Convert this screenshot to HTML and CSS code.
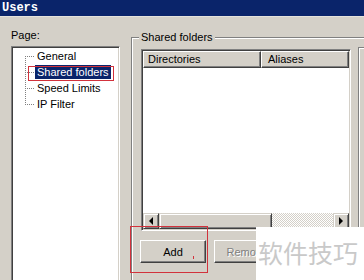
FILE: index.html
```html
<!DOCTYPE html>
<html>
<head>
<meta charset="utf-8">
<link rel="stylesheet" href="styles.css">
</head>
<body>
<div class="window">
  <div class="titlebar">Users</div>
  <div class="main">
    <div class="pages">
      <div class="label">Page:</div>
      <div class="tree">
        <div class="node"><span class="conn first"></span><span class="text">General</span></div>
        <div class="node"><span class="conn mid"></span><span class="text sel">Shared folders</span><span class="mark"></span></div>
        <div class="node"><span class="conn mid"></span><span class="text">Speed Limits</span></div>
        <div class="node"><span class="conn last"></span><span class="text">IP Filter</span></div>
      </div>
    </div>
    <fieldset class="group">
      <legend>Shared folders</legend>
      <div class="row">
        <div class="list">
          <div class="header">
            <div class="col c1">Directories</div>
            <div class="col c2">Aliases</div>
          </div>
          <div class="body"></div>
          <div class="hscroll">
            <div class="sbtn"><span class="arrow-left"></span></div>
            <div class="thumb"></div>
            <div class="track"></div>
            <div class="sbtn"><span class="arrow-right"></span></div>
          </div>
        </div>
        <div class="side"></div>
      </div>
      <div class="buttons">
        <div class="btnwrap">
          <button class="btn">Add</button>
          <span class="redbox"></span>
          <span class="tick"></span>
        </div>
        <button class="btn" disabled>Remove</button>
      </div>
    </fieldset>
  </div>
  <div class="watermark">软件技巧</div>
</div>
</body>
</html>
```

FILE: styles.css
```css
html, body {
  margin: 0;
  padding: 0;
  width: 364px;
  height: 280px;
  overflow: hidden;
  background: #d4d0c8;
}

.window {
  position: relative;
  width: 364px;
  height: 280px;
  overflow: hidden;
  font-family: "Liberation Sans", Arial, sans-serif;
  font-size: 11px;
  color: #000;
}

.titlebar {
  height: 17px;
  line-height: 17px;
  background: #0a246a;
  color: #fff;
  font-family: "Liberation Mono", "DejaVu Sans Mono", monospace;
  font-weight: bold;
  font-size: 12px;
  padding-left: 2px;
  border-bottom: 1px solid #e4e2dc;
  box-sizing: border-box;
}

.main {
  display: flex;
  align-items: flex-start;
  padding-left: 11px;
}

.pages {
  flex: none;
  width: 109px;
  margin-top: 12px;
}

.label {
  line-height: 13px;
  height: 13px;
}

.tree {
  margin-top: 4px;
  height: 260px;
  background: #fff;
  border: 1px solid;
  border-color: #808080 #fff #fff #808080;
  box-shadow: inset 1px 1px 0 #404040, inset -1px -1px 0 #d4d0c8;
  padding: 1px;
  box-sizing: border-box;
}

.node {
  position: relative;
  display: flex;
  align-items: center;
  height: 16px;
}

.conn {
  flex: none;
  width: 22px;
  height: 16px;
  background-repeat: no-repeat;
}

.conn.first {
  background-image:
    repeating-linear-gradient(to right, #808080 0 1px, transparent 1px 2px),
    repeating-linear-gradient(to bottom, #808080 0 1px, transparent 1px 2px);
  background-size: 10px 1px, 1px 8px;
  background-position: 12px 8px, 12px 8px;
}

.conn.mid {
  background-image:
    repeating-linear-gradient(to right, #808080 0 1px, transparent 1px 2px),
    repeating-linear-gradient(to bottom, #808080 0 1px, transparent 1px 2px);
  background-size: 10px 1px, 1px 16px;
  background-position: 12px 8px, 12px 0;
}

.conn.last {
  background-image:
    repeating-linear-gradient(to right, #808080 0 1px, transparent 1px 2px),
    repeating-linear-gradient(to bottom, #808080 0 1px, transparent 1px 2px);
  background-size: 10px 1px, 1px 9px;
  background-position: 12px 8px, 12px 0;
}

.text {
  line-height: 14px;
  padding: 0 2px;
  white-space: nowrap;
}

.text.sel {
  background: #0a246a;
  color: #fff;
}

.mark {
  position: absolute;
  left: 15px;
  top: 2px;
  width: 86px;
  height: 15px;
  border: 1px solid #d2323c;
  box-sizing: border-box;
}

.group {
  flex: none;
  margin: 14px 0 0 11px;
  padding: 5px 0 0 9px;
  border: 1px solid #808080;
  box-shadow: inset 1px 1px 0 #fff;
  min-width: 0;
  height: 300px;
  box-sizing: border-box;
}

.group legend {
  margin-left: -2px;
  padding: 0 2px;
  line-height: 13px;
  background: #d4d0c8;
}

.row {
  display: flex;
  align-items: flex-start;
  gap: 7px;
  height: 182px;
}

.list {
  flex: none;
  width: 210px;
  height: 182px;
  display: flex;
  flex-direction: column;
  border: 1px solid;
  border-color: #808080 #fff #fff #808080;
  box-shadow: inset 1px 1px 0 #404040, inset -1px -1px 0 #d4d0c8;
  padding: 1px;
  box-sizing: border-box;
  background: #fff;
}

.header {
  display: flex;
  height: 17px;
  flex: none;
}

.col {
  height: 17px;
  line-height: 15px;
  background: #d4d0c8;
  border-top: 1px solid #fff;
  border-left: 1px solid #fff;
  border-right: 1px solid #404040;
  border-bottom: 1px solid #404040;
  box-shadow: inset -1px -1px 0 #808080;
  box-sizing: border-box;
  white-space: nowrap;
  overflow: hidden;
}

.c1 {
  width: 118px;
  padding-left: 4px;
}

.c2 {
  flex: 1;
  padding-left: 6px;
}

.body {
  flex: 1;
  background: #fff;
}

.hscroll {
  display: flex;
  height: 16px;
  flex: none;
}

.sbtn, .thumb {
  background: #d4d0c8;
  border-top: 1px solid #d4d0c8;
  border-left: 1px solid #d4d0c8;
  border-right: 1px solid #404040;
  border-bottom: 1px solid #404040;
  box-shadow: inset 1px 1px 0 #fff, inset -1px -1px 0 #808080;
  box-sizing: border-box;
}

.sbtn {
  flex: none;
  width: 16px;
  height: 16px;
  display: flex;
  align-items: center;
  justify-content: center;
}

.thumb {
  flex: none;
  width: 113px;
  height: 16px;
}

.track {
  flex: 1;
  height: 16px;
  background-color: #fff;
  background-image: repeating-conic-gradient(#d4d0c8 0 25%, #fff 0 50%);
  background-size: 2px 2px;
}

.arrow-left {
  width: 0;
  height: 0;
  border-top: 4px solid transparent;
  border-bottom: 4px solid transparent;
  border-right: 4px solid #000;
}

.arrow-right {
  width: 0;
  height: 0;
  border-top: 4px solid transparent;
  border-bottom: 4px solid transparent;
  border-left: 4px solid #000;
}

.side {
  flex: none;
  margin-top: -2px;
  width: 30px;
  height: 180px;
  border-top: 1px solid #808080;
  border-left: 1px solid #808080;
  box-shadow: inset 1px 1px 0 #fff;
}

.buttons {
  display: flex;
  gap: 8px;
  margin-top: 9px;
  margin-left: -1px;
}

.btnwrap {
  position: relative;
  display: flex;
}

.btn {
  width: 66px;
  height: 23px;
  margin: 0;
  padding: 0;
  font-family: "Liberation Sans", Arial, sans-serif;
  font-size: 11px;
  color: #000;
  background: #d4d0c8;
  border: 1px solid;
  border-color: #fff #404040 #404040 #fff;
  box-shadow: inset -1px -1px 0 #808080;
  box-sizing: border-box;
}

.btn:disabled {
  color: #808080;
  text-shadow: 1px 1px 0 #fff;
}

.redbox {
  position: absolute;
  left: -10px;
  top: -14px;
  width: 78px;
  height: 47px;
  border: 1px solid #d2323c;
  box-sizing: border-box;
}

.tick {
  position: absolute;
  left: 53px;
  top: 16px;
  width: 1px;
  height: 3px;
  background: #d2323c;
}

.watermark {
  position: absolute;
  left: 256px;
  top: 227px;
  width: 108px;
  height: 53px;
  background: #fff;
  color: #c9c9c9;
  font-family: "Noto Sans CJK SC", sans-serif;
  font-size: 25px;
  line-height: 25px;
  padding: 13px 0 0 2px;
  box-sizing: border-box;
  white-space: nowrap;
}
```
